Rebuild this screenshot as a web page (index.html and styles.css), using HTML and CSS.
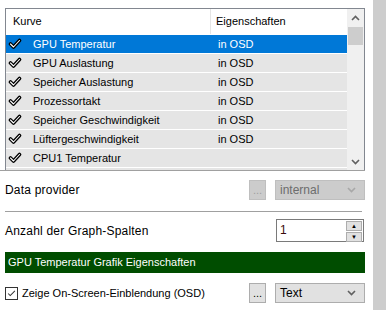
FILE: index.html
```html
<!DOCTYPE html>
<html lang="de">
<head>
    <meta charset="UTF-8">
    <title>Graph Eigenschaften</title>
    <link rel="stylesheet" href="styles.css">
</head>
<body>

<div class="main">
    <div class="list">
        <div class="table">
            <div class="head">
                <div class="col1">Kurve</div>
                <div class="col2">Eigenschaften</div>
            </div>
            <div class="row selected">
                <div class="col1"><svg class="check" viewBox="0 0 14 12"><path d="M2.5 6 L5.5 9 L11.5 2.5"/><path class="ink" d="M2.5 6 L5.5 9 L11.5 2.5"/></svg>GPU Temperatur</div>
                <div class="col2">in OSD</div>
            </div>
            <div class="row">
                <div class="col1"><svg class="check" viewBox="0 0 14 12"><path d="M2.5 6 L5.5 9 L11.5 2.5"/><path class="ink" d="M2.5 6 L5.5 9 L11.5 2.5"/></svg>GPU Auslastung</div>
                <div class="col2">in OSD</div>
            </div>
            <div class="row">
                <div class="col1"><svg class="check" viewBox="0 0 14 12"><path d="M2.5 6 L5.5 9 L11.5 2.5"/><path class="ink" d="M2.5 6 L5.5 9 L11.5 2.5"/></svg>Speicher Auslastung</div>
                <div class="col2">in OSD</div>
            </div>
            <div class="row">
                <div class="col1"><svg class="check" viewBox="0 0 14 12"><path d="M2.5 6 L5.5 9 L11.5 2.5"/><path class="ink" d="M2.5 6 L5.5 9 L11.5 2.5"/></svg>Prozessortakt</div>
                <div class="col2">in OSD</div>
            </div>
            <div class="row">
                <div class="col1"><svg class="check" viewBox="0 0 14 12"><path d="M2.5 6 L5.5 9 L11.5 2.5"/><path class="ink" d="M2.5 6 L5.5 9 L11.5 2.5"/></svg>Speicher Geschwindigkeit</div>
                <div class="col2">in OSD</div>
            </div>
            <div class="row">
                <div class="col1"><svg class="check" viewBox="0 0 14 12"><path d="M2.5 6 L5.5 9 L11.5 2.5"/><path class="ink" d="M2.5 6 L5.5 9 L11.5 2.5"/></svg>Lüftergeschwindigkeit</div>
                <div class="col2">in OSD</div>
            </div>
            <div class="row">
                <div class="col1"><svg class="check" viewBox="0 0 14 12"><path d="M2.5 6 L5.5 9 L11.5 2.5"/><path class="ink" d="M2.5 6 L5.5 9 L11.5 2.5"/></svg>CPU1 Temperatur</div>
                <div class="col2"></div>
            </div>
            <div class="row">
                <div class="col1"><svg class="check" viewBox="0 0 14 12"><path d="M2.5 6 L5.5 9 L11.5 2.5"/><path class="ink" d="M2.5 6 L5.5 9 L11.5 2.5"/></svg></div>
                <div class="col2"></div>
            </div>
        </div>
        <div class="vscroll">
            <div class="arrow"><svg viewBox="0 0 9 6"><path d="M1 5 L4.5 1.5 L8 5"/></svg></div>
            <div class="thumb"></div>
            <div class="track"></div>
            <div class="arrow"><svg viewBox="0 0 9 6"><path d="M1 1 L4.5 4.5 L8 1"/></svg></div>
        </div>
    </div>
    <div class="rule wide"></div>

    <div class="field">
        <span class="label">Data provider</span>
        <div class="controls">
            <button class="dots" disabled>...</button>
            <div class="select disabled">internal<svg viewBox="0 0 9 6"><path d="M1 1 L4.5 4.5 L8 1"/></svg></div>
        </div>
    </div>
    <div class="rule"></div>

    <div class="field spin-field">
        <span class="label">Anzahl der Graph-Spalten</span>
        <div class="controls">
            <div class="spin">
                <div class="spin-value">1</div>
                <div class="spin-buttons">
                    <div class="spin-btn">&#9650;</div>
                    <div class="spin-btn">&#9660;</div>
                </div>
            </div>
        </div>
    </div>

    <div class="section-bar">GPU Temperatur Grafik Eigenschaften</div>

    <div class="field osd">
        <label class="checkbox">
            <span class="box"><svg viewBox="0 0 13 13"><path d="M2.5 6.5 L5 9 L10.5 3.5"/></svg></span>
            Zeige On-Screen-Einblendung (OSD)
        </label>
        <div class="controls">
            <button class="dots">...</button>
            <div class="select">Text<svg viewBox="0 0 9 6"><path d="M1 1 L4.5 4.5 L8 1"/></svg></div>
        </div>
    </div>
</div>
<div class="strip"></div>

</body>
</html>
```

FILE: styles.css
```css
body {
    margin: 0;
    display: flex;
    height: 310px;
    overflow: hidden;
    background-color: #ffffff;
    font-family: "Liberation Sans", Arial, sans-serif;
    font-size: 12px;
    color: #000;
}
.main {
    flex: 1;
    padding: 8px 0 0 5px;
}
.strip {
    width: 13px;
    background-color: #cdcdcd;
}
.list {
    display: flex;
    width: 360px;
    height: 163px;
    border: 1px solid #828790;
    box-sizing: border-box;
    overflow: hidden;
}
.table {
    flex: 1;
    font-size: 11px;
}
.head, .row {
    display: grid;
    grid-template-columns: 204px 137px;
}
.head {
    height: 25px;
    line-height: 25px;
}
.head .col1 {
    padding-left: 7px;
}
.head .col2 {
    border-left: 1px solid #e5e5e5;
    padding-left: 5px;
}
.row {
    height: 18px;
    line-height: 18px;
    background-color: #e5e5e5;
    border-top: 1px solid #ffffff;
}
.row .col1 {
    display: flex;
    align-items: center;
    padding-left: 2px;
}
.row .col2 {
    padding-left: 8px;
}
.row.selected {
    background-color: #0078d7;
    color: #ffffff;
}
.check {
    width: 14px;
    height: 12px;
    margin-right: 11px;
}
.check path {
    fill: none;
    stroke: #000000;
    stroke-width: 3.6;
    stroke-linecap: round;
    stroke-linejoin: round;
}
.check path.ink {
    stroke: #ffffff;
    stroke-width: 1.1;
}
.vscroll {
    width: 17px;
    background-color: #f0f0f0;
    display: flex;
    flex-direction: column;
}
.arrow {
    height: 17px;
    display: flex;
    align-items: center;
    justify-content: center;
}
.arrow svg {
    width: 9px;
    height: 6px;
}
.arrow path, .select path {
    fill: none;
    stroke: #606060;
    stroke-width: 1.6;
}
.thumb {
    height: 18px;
    margin: 1px 1px 0;
    background-color: #cdcdcd;
}
.track {
    flex: 1;
}
.rule {
    height: 1px;
    width: 357px;
    background-color: #a0a0a0;
}
.rule.wide {
    margin-left: -5px;
    width: 365px;
    margin-top: -1px;
}
.field {
    display: flex;
    align-items: center;
    justify-content: space-between;
    width: 360px;
    height: 20px;
    margin: 9px 0 11px;
}
.label {
    letter-spacing: 0.2px;
}
.controls {
    display: flex;
    gap: 9px;
}
.dots {
    width: 17px;
    height: 20px;
    padding: 0;
    font-family: inherit;
    font-size: 11px;
    background-color: #e1e1e1;
    border: 1px solid #adadad;
    color: #000;
}
.dots:disabled {
    background-color: #cccccc;
    border-color: #bfbfbf;
    color: #a0a0a0;
}
.select {
    width: 90px;
    height: 20px;
    box-sizing: border-box;
    border: 1px solid #adadad;
    background-color: #e1e1e1;
    padding: 0 8px 0 4px;
    display: flex;
    align-items: center;
    justify-content: space-between;
}
.select svg {
    width: 9px;
    height: 6px;
}
.select.disabled {
    background-color: #cccccc;
    border-color: #bfbfbf;
    color: #6d6d6d;
}
.select.disabled path {
    stroke: #a8a8a8;
}
.spin-field {
    height: 23px;
    margin: 7px 0 10px;
}
.spin {
    display: flex;
    width: 88px;
    height: 23px;
    box-sizing: border-box;
    border: 1px solid #7a7a7a;
    margin-right: 1px;
}
.spin-value {
    flex: 1;
    padding: 3px 0 0 3px;
    color: #3a0a0a;
}
.spin-buttons {
    width: 16px;
    display: flex;
    flex-direction: column;
    padding: 1px 1px 1px 0;
    gap: 1px;
}
.spin-btn {
    flex: 1;
    background-color: #e1e1e1;
    border: 1px solid #adadad;
    font-size: 6px;
    line-height: 8px;
    text-align: center;
    color: #000;
}
.section-bar {
    width: 360px;
    height: 21px;
    line-height: 21px;
    box-sizing: border-box;
    padding-left: 3px;
    background-color: #004d00;
    color: #ffffff;
    font-size: 11px;
}
.osd {
    margin-top: 10px;
}
.checkbox {
    display: flex;
    align-items: center;
    font-size: 11px;
}
.box {
    width: 13px;
    height: 13px;
    box-sizing: border-box;
    border: 1px solid #333333;
    margin-right: 4px;
    display: flex;
}
.box svg {
    width: 11px;
    height: 11px;
}
.box path {
    fill: none;
    stroke: #333333;
    stroke-width: 1.2;
}
```
